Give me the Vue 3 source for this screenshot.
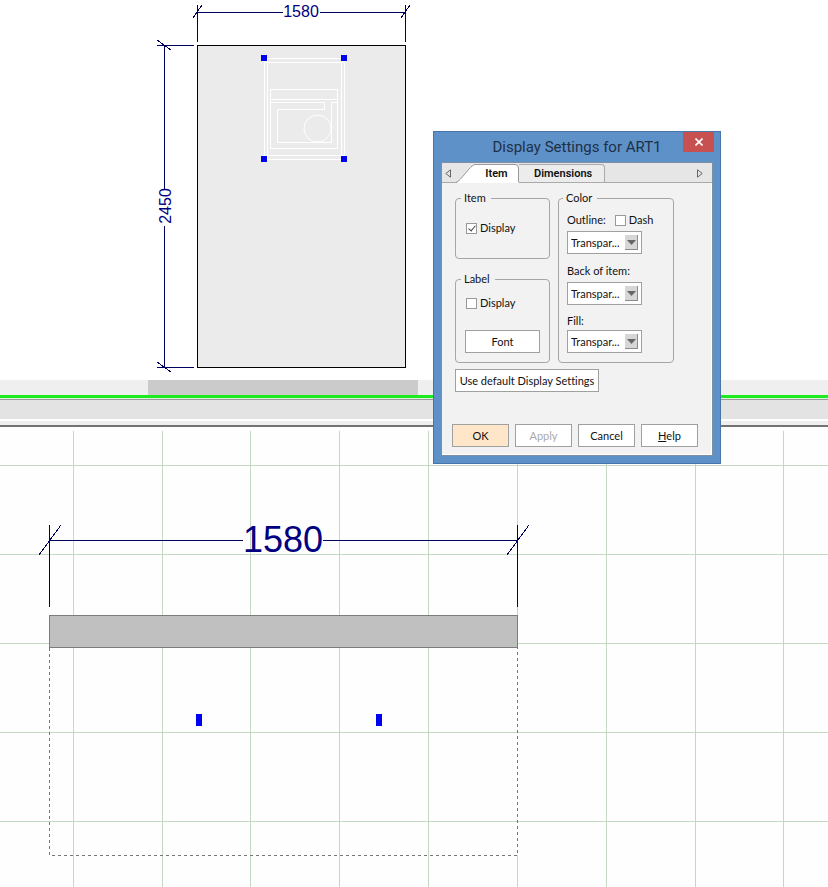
<script setup>
import { ref } from 'vue'

const gridX = [73, 162, 250, 339, 428, 517, 606, 695, 783]
const gridY = [38, 127, 216, 305, 394]
const handles = [[261, 55], [341, 55], [261, 156], [341, 156]]

const itemDisplay = ref(true)
const labelDisplay = ref(false)
const dash = ref(false)
const colors = ref([
  { id: 'outline', label: 'Outline:', value: 'Transpar...' },
  { id: 'back', label: 'Back of item:', value: 'Transpar...' },
  { id: 'fill', label: 'Fill:', value: 'Transpar...' }
])
</script>

<template>
  <main class="workspace">
    <section class="elevation" aria-label="Elevation view">
      <svg class="canvas" shape-rendering="crispEdges">
        <rect x="197.5" y="45.5" width="208" height="322" fill="#ebebeb" stroke="#000" />
        <g fill="none" stroke="#fff">
          <path d="M264 58.5H345M264 62.5H345M264 155.5H345M264 159.5H345" />
          <path d="M264.5 58V160M267.5 58V160M341.5 58V160M344.5 58V160" />
          <path d="M270.5 89V149M337.5 89V149M270 89.5H338M270 99.5H338M270 148.5H338" />
          <path d="M270 102.5H324.5V109.5H277.5V142.5H331.5V102.5H338" />
          <circle cx="317.5" cy="128.5" r="13.5" shape-rendering="auto" />
        </g>
        <rect v-for="h in handles" :key="h.join()" :x="h[0]" :y="h[1]" width="6" height="6" fill="#0000f0" />
        <g fill="none" stroke="#000060">
          <path d="M197.5 5V42M405.5 5V42M197 12.5H283M320 12.5H405" />
          <path d="M193 18L202 5M401 18L410 5" />
          <path d="M164.5 45V189M164.5 226V368M157 45.5H194M157 367.5H194" />
          <path d="M157 40L171 50M157 362L171 372" />
        </g>
        <text class="dim" x="301" y="17" text-anchor="middle">1580</text>
        <text class="dim" transform="translate(171 206) rotate(-90)" text-anchor="middle">2450</text>
      </svg>
    </section>

    <div class="floor"><div class="floor-item"></div></div>
    <div class="ground"></div>
    <div class="splitter"></div>

    <section class="plan" aria-label="Plan view">
      <svg class="canvas" shape-rendering="crispEdges">
        <g fill="#c3d9c3">
          <rect v-for="x in gridX" :key="'x' + x" :x="x" y="4" width="1" height="100%" />
          <rect v-for="y in gridY" :key="'y' + y" x="0" :y="y" width="100%" height="1" />
        </g>
        <path d="M517.5 221V428" stroke="#fff" />
        <path d="M49.5 221V428.5H517.5V221" fill="none" stroke="#777" stroke-dasharray="3 3" />
        <rect x="49.5" y="188.5" width="468" height="32" fill="#c0c0c0" stroke="#7c7c7c" />
        <rect x="196" y="287" width="6" height="12" fill="#0000f0" />
        <rect x="376" y="287" width="6" height="12" fill="#0000f0" />
        <path d="M49.5 98V180M517.5 98V180M49 113.5H243M323 113.5H517M39 128L61 98M507 128L529 98" fill="none" stroke="#000060" />
        <text class="dim-large" x="283" y="125" text-anchor="middle">1580</text>
      </svg>
    </section>

    <form class="dialog" role="dialog" aria-labelledby="dialog-title" @submit.prevent>
      <header class="titlebar">
        <h1 id="dialog-title">Display Settings for ART1</h1>
        <button class="close" type="button" aria-label="Close">
          <svg width="8" height="8" viewBox="0 0 8 8"><path d="M.5 .5L7.5 7.5M7.5 .5L.5 7.5" stroke="#fff" stroke-width="1.6" /></svg>
        </button>
      </header>
      <div class="body">
        <nav class="tabs">
          <button class="scroll" type="button" aria-label="Previous tab">
            <svg width="6" height="9" viewBox="0 0 6 9"><path d="M5.5 .8V8.2L.8 4.5Z" fill="none" stroke="#666" /></svg>
          </button>
          <button class="tab active" type="button">
            <svg class="tab-shape" width="63" height="19" viewBox="0 0 63 19">
              <path d="M0 19C5 17 14 1 19 .5H59Q62.5 .5 62.5 4V19Z" fill="#fff" />
              <path d="M0 18.5C5 17 14 1 19 .5H59Q62.5 .5 62.5 4V18" fill="none" stroke="#999" />
            </svg>
            <span>Item</span>
          </button>
          <button class="tab" type="button"><span>Dimensions</span></button>
          <button class="scroll next" type="button" aria-label="Next tab">
            <svg width="6" height="9" viewBox="0 0 6 9"><path d="M.5 .8V8.2L5.2 4.5Z" fill="none" stroke="#666" /></svg>
          </button>
        </nav>
        <div class="panel">
          <div class="groups">
            <div class="column">
              <fieldset class="item-group">
                <legend>Item</legend>
                <label class="check"><input v-model="itemDisplay" type="checkbox" />Display</label>
              </fieldset>
              <fieldset class="label-group">
                <legend>Label</legend>
                <label class="check"><input v-model="labelDisplay" type="checkbox" />Display</label>
                <button class="btn" type="button">Font</button>
              </fieldset>
            </div>
            <fieldset class="color-group">
              <legend>Color</legend>
              <div v-for="c in colors" :key="c.id" class="field" :class="c.id">
                <div class="field-head">
                  <label :for="c.id">{{ c.label }}</label>
                  <label v-if="c.id === 'outline'" class="check"><input v-model="dash" type="checkbox" />Dash</label>
                </div>
                <div class="picker">
                  <select :id="c.id" v-model="c.value"><option>Transpar...</option></select>
                  <span class="drop"><svg width="9" height="5" viewBox="0 0 9 5"><path d="M0 0H9L4.5 5Z" fill="#666" /></svg></span>
                </div>
              </div>
            </fieldset>
          </div>
          <button class="btn defaults" type="button">Use default Display Settings</button>
          <footer class="actions">
            <button class="btn ok" type="submit">OK</button>
            <button class="btn" type="button" disabled>Apply</button>
            <button class="btn" type="button">Cancel</button>
            <button class="btn" type="button"><u>H</u>elp</button>
          </footer>
        </div>
      </div>
    </form>
  </main>
</template>

<style>
body { margin: 0; background: #fff; }
</style>

<style scoped>
* { box-sizing: border-box; }
.workspace {
  position: relative;
  display: flex;
  flex-direction: column;
  min-height: 100vh;
  overflow: hidden;
  background: #fff;
  font: 11px/14px Lato, "Liberation Sans", sans-serif;
  font-variant-ligatures: none;
  color: #111;
}
.elevation { height: 380px; }
.canvas { display: block; width: 100%; height: 100%; }
.dim, .dim-large { font-family: "Liberation Sans", Arial, sans-serif; fill: #000080; }
.dim { font-size: 16px; }
.dim-large { font-size: 36px; }
.floor { height: 18px; padding-left: 148px; background: #efefef; border-bottom: 3px solid #1beb1f; }
.floor-item { width: 270px; height: 15px; background: #cbcbcb; }
.ground { height: 22px; background: #e3e3e3; border-top: 1px solid #d8f5d8; border-bottom: 1px solid #fff; box-shadow: inset 0 1px #999; }
.splitter { height: 7px; background: #efefef; border-top: 1px solid #fff; border-bottom: 2px solid #737373; }
.plan { flex: 1; display: grid; min-height: 440px; background: #fefefe; }

.dialog {
  position: absolute;
  left: 433px;
  top: 131px;
  width: 288px;
  padding: 0 7px 7px;
  background: #5f91c9;
  border: 1px solid #4674ab;
}
.titlebar { display: flex; align-items: flex-start; height: 30px; }
h1 { flex: 1; margin: 0; padding-left: 30px; text-align: center; font: 15px/30px Roboto, "Noto Sans", sans-serif; color: #1d3047; white-space: nowrap; }
.close { display: grid; place-items: center; width: 31px; height: 20px; padding: 0; margin-right: -1px; background: #c75050; border: 0; }
.body { border: 1px solid #7d8fa5; background: #f2f2f2; }
.tabs { display: flex; align-items: flex-end; height: 20px; padding: 0 8px 0 2px; background: #e6e6e6; box-shadow: inset 0 -1px #aaa; }
.tab { position: relative; height: 19px; padding: 0 12px 0 15px; border: 1px solid #aaa; border-left: 0; border-radius: 0 4px 0 0; background: #ececec; color: #111; font: 600 11px/16px Roboto, sans-serif; }
.tab.active { width: 63px; margin-left: 4px; padding: 0 11px 0 29px; border: 0; background: none; }
.tab-shape { position: absolute; left: 0; top: 0; }
.tab span { position: relative; }
.scroll { display: grid; place-items: center; width: 8px; height: 19px; padding: 0; background: none; border: 0; }
.next { margin-left: auto; }

.panel { padding: 8px 13px 7px; border: solid #fff; border-width: 0 1px 1px 0; }
.groups { display: grid; grid-template-columns: 95px 116px; gap: 8px; }
.column { display: flex; flex-direction: column; gap: 13px; }
fieldset { min-width: 0; margin: 0; padding: 0 9px; border: 1px solid #a6a6a6; border-radius: 4px; }
legend { padding: 0 5px 0 3px; margin-left: -4px; line-height: 14px; }
.item-group { height: 68px; padding-top: 16px; }
.label-group { height: 91px; padding-top: 10px; }
.label-group .btn { width: 100%; margin-top: 20px; }
.color-group { height: 172px; padding: 8px 0 0 8px; }
.check { display: flex; align-items: center; gap: 3px; height: 14px; }
input {
  appearance: none;
  position: relative;
  width: 11px;
  height: 11px;
  margin: 0 0 0 1px;
  background: #fff;
  border: 1px solid #999;
}
input:checked::after { content: ""; position: absolute; left: 3px; top: 0; width: 3px; height: 6px; border: solid #444; border-width: 0 1px 1px 0; transform: rotate(40deg); }
.field-head { display: flex; gap: 8px; height: 14px; }
.picker { position: relative; width: 75px; margin-top: 4px; }
.fill .picker { margin-top: 2px; }
.back { margin-top: 10px; }
.fill { margin-top: 9px; }
select { appearance: none; display: block; width: 100%; height: 23px; padding: 0 0 0 3px; background: #fff; border: 1px solid #a0a0a0; border-radius: 0; color: #111; font: inherit; }
.drop { position: absolute; right: 4px; top: 4px; display: grid; place-items: center; width: 13px; height: 15px; background: #d6d6d6; border: solid #8c8c8c; border-width: 0 1px 1px 0; pointer-events: none; }
.btn { height: 23px; padding: 0; background: #fff; border: 1px solid #a0a0a0; color: #111; font: inherit; font-variant-ligatures: none; white-space: nowrap; }
.defaults { display: block; width: 144px; margin-top: 6px; }
.actions { display: flex; gap: 6px; margin: 32px 0 0 -3px; }
.actions .btn { width: 57px; }
.actions .ok { background: #ffe6c8; }
.btn:disabled { color: #aaa; }
</style>
